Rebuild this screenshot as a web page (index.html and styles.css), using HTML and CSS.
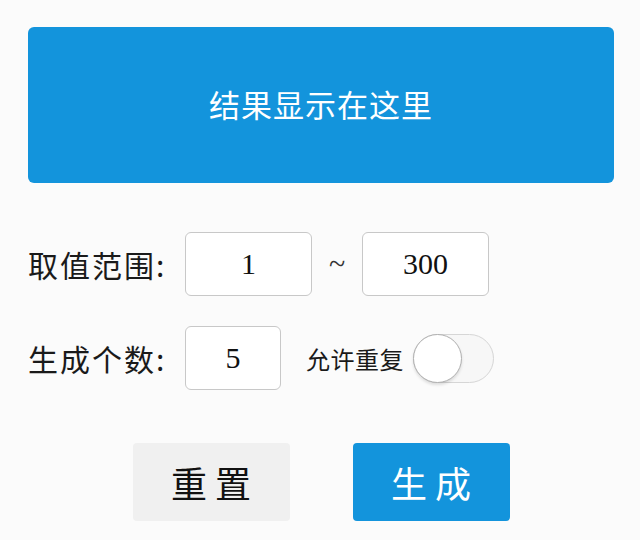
FILE: index.html
```html
<!DOCTYPE html>
<html lang="zh">
<head>
  <meta charset="utf-8" />
  <title>随机数生成</title>
  <link rel="stylesheet" href="styles.css">
</head>
<body>
  <div class="container">
    <div class="result">结果显示在这里</div>

    <div class="row range-row">
      <span class="label">取值范围:</span>
      <input class="num" type="text" value="1" />
      <span class="tilde">~</span>
      <input class="num" type="text" value="300" />
    </div>

    <div class="row count-row">
      <span class="label">生成个数:</span>
      <input class="num small" type="text" value="5" />
      <span class="repeat">允许重复</span>
      <label class="switch">
        <input type="checkbox" />
        <span class="knob"></span>
      </label>
    </div>

    <div class="button-group">
      <button class="btn reset">重置</button>
      <button class="btn make">生成</button>
    </div>
  </div>
</body>
</html>
```

FILE: styles.css
```css
* {
    padding: 0;
    margin: 0;
    box-sizing: border-box;
}

body {
    background-color: #fbfbfb;
    font-family: "Noto Sans CJK SC", "Noto Sans", sans-serif;
    color: #1a1a1a;
}

.container {
    width: 586px;
    margin: 27px 0 0 28px;
}

.result {
    height: 156px;
    background-color: #1394dc;
    border-radius: 6px;
    color: #ffffff;
    font-size: 31px;
    display: flex;
    align-items: center;
    justify-content: center;
    letter-spacing: 1px;
    padding-bottom: 4px;
}

.row {
    display: flex;
    align-items: center;
}

.range-row {
    margin-top: 49px;
}

.count-row {
    margin-top: 30px;
}

.label {
    width: 157px;
    font-size: 30px;
    letter-spacing: 2px;
}

.num {
    width: 127px;
    height: 64px;
    border: 1px solid #c8c8c8;
    border-radius: 6px;
    background-color: #ffffff;
    text-align: center;
    font-family: "Liberation Serif", serif;
    font-size: 30px;
    color: #111111;
    outline: none;
}

.num.small {
    width: 96px;
}

.tilde {
    width: 50px;
    text-align: center;
    font-family: "Liberation Serif", serif;
    font-size: 30px;
    color: #333333;
}

.repeat {
    margin-left: 25px;
    font-size: 24px;
    letter-spacing: 0.5px;
}

.switch {
    position: relative;
    display: block;
    width: 81px;
    height: 49px;
    margin-left: 9px;
    border: 1px solid #d6d6d6;
    border-radius: 25px;
    background-color: #f7f7f7;
}

.switch input {
    display: none;
}

.knob {
    position: absolute;
    left: -1px;
    top: -1px;
    width: 49px;
    height: 49px;
    border-radius: 50%;
    background-color: #ffffff;
    border: 1px solid #b0b0b0;
    box-shadow: 0 2px 3px rgba(0, 0, 0, 0.12);
}

.button-group {
    display: flex;
    justify-content: center;
    gap: 63px;
    margin-top: 53px;
}

.btn {
    width: 157px;
    height: 78px;
    border: none;
    border-radius: 4px;
    font-family: "Noto Sans CJK SC", sans-serif;
    font-size: 36px;
    letter-spacing: 8px;
    padding-left: 8px;
    cursor: pointer;
}

.reset {
    background-color: #f0f0f0;
    color: #111111;
}

.make {
    background-color: #1394dc;
    color: #ffffff;
}
```
